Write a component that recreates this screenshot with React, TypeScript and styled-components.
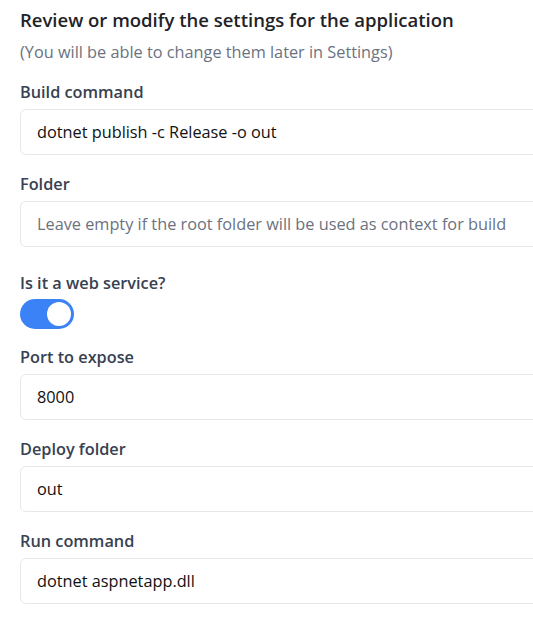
import React from "react";
import styled, { createGlobalStyle } from "styled-components";

const Global = createGlobalStyle`
  html, body { margin: 0; padding: 0; background: #ffffff; overflow: hidden; }
  body { font-family: "Open Sans", "Noto Sans", sans-serif; }
`;

const Page = styled.div`
  padding: 8px 0 0 20px;
  width: 560px;
  display: flex;
  flex-direction: column;
`;

const Heading = styled.h1`
  margin: 0;
  font-size: 18.5px;
  line-height: 24px;
  font-weight: 600;
  color: #1f2328;
`;

const Subtitle = styled.p`
  margin: 8px 0 16px;
  font-size: 16.3px;
  line-height: 24px;
  color: #6b7280;
`;

const Field = styled.div<{ $gap?: number }>`
  display: flex;
  flex-direction: column;
  margin-bottom: ${(p) => p.$gap ?? 17}px;
`;

const Label = styled.label<{ $space?: number }>`
  font-size: 16.3px;
  line-height: 24px;
  font-weight: 600;
  color: #374151;
  margin-bottom: ${(p) => p.$space ?? 5}px;
`;

const Input = styled.input`
  box-sizing: border-box;
  width: 560px;
  height: 46px;
  border: 1px solid #e5e7eb;
  border-radius: 6px;
  padding: 0 16px;
  font-family: "Open Sans", "Noto Sans", sans-serif;
  font-size: 16.3px;
  color: #111111;
  background: #fff;
  outline: none;
  &::placeholder { color: #6b7280; }
`;

const Toggle = styled.div<{ $on: boolean }>`
  width: 54px;
  height: 30px;
  border-radius: 15px;
  background: ${(p) => (p.$on ? "#3b82f6" : "#d1d5db")};
  display: flex;
  align-items: center;
  justify-content: ${(p) => (p.$on ? "flex-end" : "flex-start")};
  padding: 0 3px;
  box-sizing: border-box;
`;

const Knob = styled.span`
  width: 24px;
  height: 24px;
  border-radius: 50%;
  background: #ffffff;
`;

export default function App() {
  return (
    <>
      <Global />
      <Page>
        <Heading>Review or modify the settings for the application</Heading>
        <Subtitle>(You will be able to change them later in Settings)</Subtitle>
        <Field>
          <Label>Build command</Label>
          <Input defaultValue="dotnet publish -c Release -o out" />
        </Field>
        <Field $gap={24}>
          <Label>Folder</Label>
          <Input placeholder="Leave empty if the root folder will be used as context for build" />
        </Field>
        <Field $gap={16}>
          <Label $space={4}>Is it a web service?</Label>
          <Toggle $on={true}>
            <Knob />
          </Toggle>
        </Field>
        <Field>
          <Label>Port to expose</Label>
          <Input defaultValue="8000" />
        </Field>
        <Field>
          <Label>Deploy folder</Label>
          <Input defaultValue="out" />
        </Field>
        <Field>
          <Label>Run command</Label>
          <Input defaultValue="dotnet aspnetapp.dll" />
        </Field>
      </Page>
    </>
  );
}
